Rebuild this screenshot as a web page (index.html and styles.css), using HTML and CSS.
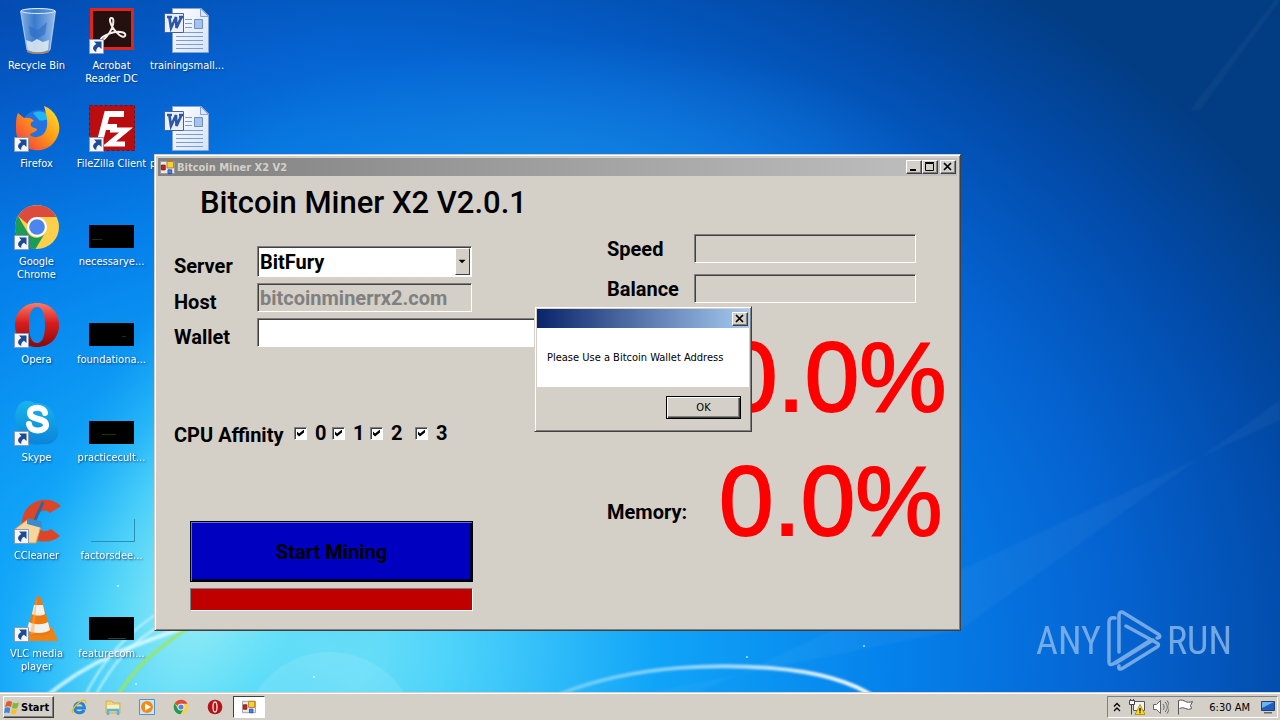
FILE: index.html
```html
<!DOCTYPE html>
<html lang="en">
<head>
<meta charset="utf-8">
<title>Desktop</title>
<link rel="stylesheet" href="styles.css">
</head>
<body>
<svg class="defs" width="0" height="0" aria-hidden="true">
  <defs>
    <linearGradient id="opera" x1="0" y1="0" x2="0" y2="1"><stop offset="0" stop-color="#ff7a66"/><stop offset=".45" stop-color="#d81e1e"/><stop offset="1" stop-color="#8c0808"/></linearGradient>
    <linearGradient id="fox" x1="1" y1="0" x2="0" y2="1"><stop offset="0" stop-color="#ffe930"/><stop offset=".45" stop-color="#ff9a16"/><stop offset="1" stop-color="#f02a48"/></linearGradient>
    <linearGradient id="page" x1="0" y1="0" x2="1" y2="1"><stop offset="0" stop-color="#fff"/><stop offset="1" stop-color="#d5e2f7"/></linearGradient>
    <linearGradient id="sky" x1="0" y1="0" x2="0" y2="1"><stop offset="0" stop-color="#18b4ee"/><stop offset="1" stop-color="#0a84d8"/></linearGradient>
    <linearGradient id="glass" x1="0" y1="0" x2="1" y2="0"><stop offset="0" stop-color="#b9d4f2" stop-opacity=".75"/><stop offset=".4" stop-color="#5d97dc" stop-opacity=".6"/><stop offset="1" stop-color="#cfe2f6" stop-opacity=".75"/></linearGradient>
    <symbol id="shortcut" viewBox="0 0 15 15">
      <path fill="#f4f6fa" stroke="#8b9bb4" d="M.5.5h14v14H.5z"/>
      <path fill="#1d4a94" d="M5 2.500h7.500V10L10 7.700C7.500 9 7 11 7.300 13 3 11 3 7.500 7.300 4.900z"/>
    </symbol>
    <symbol id="word" viewBox="0 0 48 48">
      <path fill="url(#page)" stroke="#86a3d6" d="M9.500 2.500h29l7 7v37h-36z"/>
      <path fill="#dbe8fb" stroke="#86a3d6" d="M37.500 2.500v8h8z"/>
      <path stroke="#7c9cd4" d="M13 26.500h27M13 30.500h27M13 34.500h27M13 38.500h27M13 42.500h27M22 13.500h7M22 17.500h7M22 21.500h7"/>
      <path fill="#a9c2ea" stroke="#6c8ecb" d="M31.500 13.500h8v9h-8z"/>
      <path fill="#e9f0fc" stroke="#3d63b0" d="M1.500 7.500h19v19h-19z"/>
      <path fill="none" stroke="#2c56a8" stroke-width="2.600" d="M4 11h5M6.500 12l1.500 10 5-11 .5 11 5-11M16 11h4"/>
    </symbol>
    <symbol id="chrome" viewBox="0 0 48 48">
      <circle cx="24" cy="24" r="22" fill="#fcd04a"/>
      <path fill="#dd4b3e" d="M5 13A22 22 0 0 1 43.500 14H24a10 10 0 0 0-9.500 7z"/>
      <path fill="#1a9c58" d="M5 13a22 22 0 0 0 17.500 33L32 30a10 10 0 0 1-17 0z"/>
      <circle cx="24" cy="24" r="10" fill="#fff"/><circle cx="24" cy="24" r="7.800" fill="#4c85ee"/>
    </symbol>
    <symbol id="opera-o" viewBox="0 0 48 48">
      <path fill="url(#opera)" fill-rule="evenodd" d="M24 2C37 2 46 11 46 24S37 46 24 46 2 37 2 24 11 2 24 2zm0 4c-5.500 0-8 7-8 18s2.500 18 8 18 8-7 8-18S29.500 6 24 6z"/>
    </symbol>
    <symbol id="form" viewBox="0 0 16 16">
      <path fill="#e8e8e8" stroke="#999" d="M.5 1.500h15v13H.5z"/>
      <path fill="#c22626" stroke="#7d1414" d="M1.500 5.500h4v5h-4z"/>
      <path fill="#f8cf3a" stroke="#b07c10" d="M7.500 1.500h7v7h-7z"/>
      <path fill="#4c80e8" stroke="#2450b0" d="M8.500 10.500h4v4h-4z"/>
    </symbol>
  </defs>
</svg>

<main class="desktop">
  <svg class="wallpaper" viewBox="0 0 1280 720" preserveAspectRatio="none" aria-hidden="true">
    <defs>
      <radialGradient id="base" gradientUnits="userSpaceOnUse" cx="0" cy="0" r="1" gradientTransform="translate(320 650) scale(1130 850)">
        <stop offset="0" stop-color="#74e4f8"/><stop offset=".12" stop-color="#4cd2fa"/><stop offset=".3" stop-color="#10a4f8"/><stop offset=".5" stop-color="#0582ec"/><stop offset=".7" stop-color="#0564d2"/><stop offset=".86" stop-color="#024cac"/><stop offset="1" stop-color="#023c82"/>
      </radialGradient>
      <radialGradient id="glow" gradientUnits="userSpaceOnUse" cx="0" cy="0" r="1" gradientTransform="translate(210 570) rotate(-68) scale(400 180)">
        <stop offset="0" stop-color="#b4f6f4" stop-opacity=".85"/><stop offset=".5" stop-color="#62e0f8" stop-opacity=".6"/><stop offset="1" stop-color="#30c0fa" stop-opacity="0"/>
      </radialGradient>
      <radialGradient id="top" gradientUnits="userSpaceOnUse" cx="0" cy="0" r="1" gradientTransform="translate(560 190) scale(380 150)">
        <stop offset="0" stop-color="#1a8ee6" stop-opacity=".7"/><stop offset="1" stop-color="#1a8ee6" stop-opacity="0"/>
      </radialGradient>
      <radialGradient id="corner" gradientUnits="userSpaceOnUse" cx="0" cy="0" r="1" gradientTransform="scale(340 240)"><stop offset="0" stop-color="#0440aa" stop-opacity=".4"/><stop offset="1" stop-color="#0446b0" stop-opacity="0"/></radialGradient>
      <linearGradient id="arc" x1="0" y1="0" x2="1" y2="0"><stop offset="0" stop-color="#fff" stop-opacity=".3"/><stop offset=".5" stop-color="#fff" stop-opacity=".6"/><stop offset="1" stop-color="#fff"/></linearGradient>
      <filter id="soft" x="-20%" y="-20%" width="140%" height="140%"><feGaussianBlur stdDeviation="1"/></filter>
    </defs>
    <path fill="url(#base)" d="M0 0h1280v720H0z"/>
    <path fill="url(#top)" d="M0 0h1280v400H0z"/>
    <path fill="url(#glow)" d="M0 150h600v570H0z"/>
    <path fill="url(#corner)" d="M0 0h340v240H0z"/>
    <circle cx="330" cy="740" r="88" fill="#b8f4fa" opacity=".18"/>
    <g fill="#fff" filter="url(#soft)">
      <path opacity=".04" d="M960 630L1280 400v20L700 692h-50z"/>
      <path opacity=".04" d="M1190 110L1275 0h5L1200 110z"/>
    </g>
    <g fill="none" filter="url(#soft)">
      <path stroke="#e4fcff" stroke-width="4" opacity=".8" d="M44 698C90 660 130 646 200 622"/>
      <path stroke="#e4fcff" stroke-width="2" opacity=".7" d="M84 698C102 660 130 630 160 612M94 698C110 668 130 640 168 622"/>
      <path stroke="#9ce65a" stroke-width="3" d="M117 696C140 660 160 648 190 626"/>
      <path stroke="url(#arc)" stroke-width="4" d="M560 694C640 662 730 665 770 668 810 671 850 680 876 698"/>
    </g>
    <g fill="#fff" opacity=".7"><circle cx="118" cy="586" r="1"/><circle cx="136" cy="684" r="1"/><circle cx="314" cy="677" r="1"/><circle cx="747" cy="657" r="1"/><circle cx="864" cy="646" r="1"/></g>
  </svg>

  <ul class="icons">
    <li><svg viewBox="0 0 48 48"><path fill="url(#glass)" stroke="#d6e6f8" stroke-opacity=".7" d="M7.500 5C18 2 31 2 42.500 5L37 44c-6 3-16 3-23 0z"/><path fill="#e4ebf2" opacity=".85" d="M13 34l6 2 5-3 6 3 6-2-1 11c-6 2-14 2-20 0z"/><path fill="#2d6fc4" opacity=".65" d="M16 20l9 4 9-8-2 12-8 5-7-4z"/><ellipse cx="25" cy="5" rx="17" ry="2.500" fill="#3c7fd0" fill-opacity=".6" stroke="#dcecfb"/><path fill="none" stroke="#998a72" stroke-width="2" d="M14 45c7 3 15 3 22 0"/></svg><span>Recycle Bin</span></li>
    <li><svg viewBox="0 0 48 48"><path fill="#23100f" stroke="#e1251b" stroke-width="3" d="M3.500 3.500h41v39h-41z"/><path fill="none" stroke="#f3eee6" stroke-width="2" d="M23 12c3-1 3 5 1 10S15 36 13 34s8-7 14-8 12 1 10 4-9-3-12-8-4-9-2-10z"/><use href="#shortcut" x="1" y="33" width="15" height="15"/></svg><span>Acrobat Reader DC</span></li>
    <li><svg viewBox="0 0 48 48"><use href="#word"/></svg><span>trainingsmall...</span></li>

    <li><svg viewBox="0 0 48 48"><circle cx="26" cy="24" r="18" fill="#2372e0"/><path fill="#20b7f0" d="M20 9c8-4 17 0 19 8-5-4-8 1-13-1z"/><path fill="url(#fox)" d="M5 9l6 5c4-1 8 0 10 3-4 1-4 4-2 6l5 2c-1 4-6 3-7 6 4 4 12 2 15-3 4-6 2-16-1-26 11 4 17 16 15 26-3 13-14 20-25 18C8 44 2 34 3 23c0-6 0-10 2-14z"/><use href="#shortcut" x="1" y="33" width="15" height="15"/></svg><span>Firefox</span></li>
    <li><svg viewBox="0 0 48 48"><path fill="#b90d10" stroke="#860a0c" stroke-dasharray="3 2" d="M1.500 1.500h45v45h-45z"/><path fill="none" stroke="#fff" stroke-width="6" d="M36 10H19l-7 27M15 23h14"/><path fill="none" stroke="#fff" stroke-width="5" d="M22 26h16L21 40h16"/><use href="#shortcut" x="1" y="33" width="15" height="15"/></svg><span>FileZilla Client</span></li>
    <li class="covered"><svg viewBox="0 0 48 48"><use href="#word"/></svg><span>p</span></li>

    <li><svg viewBox="0 0 48 48"><use href="#chrome" y="1"/><use href="#shortcut" x="1" y="33" width="15" height="15"/></svg><span>Google Chrome</span></li>
    <li><svg viewBox="0 0 48 48"><path d="M1 23h45v23H1z"/><path stroke="#0a3a18" d="M4 37.500h10"/></svg><span>necessarye...</span></li>
    <li class="gap"></li>

    <li><svg viewBox="0 0 48 48"><use href="#opera-o" y="1"/><use href="#shortcut" x="1" y="33" width="15" height="15"/></svg><span>Opera</span></li>
    <li><svg viewBox="0 0 48 48"><path d="M1 23h45v23H1z"/><path stroke="#0a3a18" d="M34 36.500h4"/></svg><span>foundationa...</span></li>
    <li class="gap"></li>

    <li><svg viewBox="0 0 48 48"><path fill="url(#sky)" d="M13 3c5 0 7 1 9 2 12-1 20 8 20 19 8 11 1 24-12 22C18 49 4 42 5 28-1 17 4 4 13 3z"/><path fill="none" stroke="#fff" stroke-width="6" stroke-linecap="round" d="M32 15c-1-7-15-7-15 0 0 8 16 4 16 12 0 7-16 8-17-1"/><use href="#shortcut" x="1" y="33" width="15" height="15"/></svg><span>Skype</span></li>
    <li><svg viewBox="0 0 48 48"><path d="M1 23h45v23H1z"/><path stroke="#0a3a18" d="M14 36.500h14"/></svg><span>practicecult...</span></li>
    <li class="gap"></li>

    <li><svg viewBox="0 0 48 48"><path fill="#dd4526" d="M48 10l-11 7c-5-5-14-2-14 8 0 9 8 13 15 8l9 7C36 50 11 47 9 27 9 7 33-4 48 10z"/><path fill="#f6d69c" stroke="#cf9b58" d="M14 24l14 6-5 17H8L2 33z"/><path fill="#3c8bc8" d="M14 22l14 3 1 7-15-4z"/><path stroke="#2767a8" stroke-width="3" d="M22 24l8-18"/><use href="#shortcut" x="1" y="33" width="15" height="15"/></svg><span>CCleaner</span></li>
    <li><svg viewBox="0 0 48 48"><path fill="none" stroke="#2c8fb0" d="M3 45.500h43.500V23"/></svg><span>factorsdee...</span></li>
    <li class="gap"></li>

    <li><svg viewBox="0 0 48 48"><path fill="#f08213" d="M13 33h26l6 14H12z"/><path fill="#ee7a0e" d="M23 4c1-2 4-2 5 0l10 34c-4 5-20 5-24 0z"/><path fill="#f1f1ee" d="M21 11h9l2 9c-3 2-10 2-13 0zM16 28c5 3 14 3 19 0l2 8c-5 4-18 4-23 0z"/><path fill="#ffa840" opacity=".5" d="M24 5l-3 35h-4l6-34z"/><use href="#shortcut" x="1" y="33" width="15" height="15"/></svg><span>VLC media player</span></li>
    <li><svg viewBox="0 0 48 48"><path d="M1 23h45v23H1z"/><path stroke="#174a4a" d="M20 44.500h18"/></svg><span>featurecom...</span></li>
    <li class="gap"></li>
  </ul>

  <div class="watermark">
    <span>ANY</span>
    <svg viewBox="0 0 56 62" aria-hidden="true"><g fill="none" stroke="currentColor" stroke-width="3.500" stroke-linejoin="round" stroke-linecap="round"><path d="M9 8C5 7 3 9 3 12v40c0 3 2 3 4 2l38-24"/><path d="M13 42V6c0-4 2-5 5-3l34 21c3 2 2 4-1 4"/><path d="M20 16l31 17c2 1 2 3 0 4L17 58c-3 2-5 1-4-2"/><path d="M10 53l37-23"/></g></svg>
    <span>RUN</span>
  </div>

  <section class="window app" aria-label="Bitcoin Miner X2 V2">
    <header class="titlebar inactive">
      <svg class="form-icon" viewBox="0 0 16 16"><use href="#form"/></svg>
      <span class="caption">Bitcoin Miner X2 V2</span>
      <div class="controls">
        <button aria-label="Minimize"><svg viewBox="0 0 12 10"><path stroke="#000" stroke-width="2" d="M2 8h6"/></svg></button>
        <button aria-label="Maximize"><svg viewBox="0 0 12 10"><path fill="none" stroke="#000" d="M1.500 1.500h8v7h-8zM1 .5h9"/></svg></button>
        <button class="close" aria-label="Close"><svg viewBox="0 0 12 10"><path stroke="#000" stroke-width="1.700" d="M2 1l7 7M9 1L2 8"/></svg></button>
      </div>
    </header>
    <div class="client">
      <h1>Bitcoin Miner X2 V2.0.1</h1>
      <form class="settings">
        <div class="field">
          <label for="server">Server</label>
          <div class="combo">
            <select id="server"><option>BitFury</option></select>
            <svg class="drop" viewBox="0 0 15 26" aria-hidden="true"><path d="M3 11h8l-4 4z"/></svg>
          </div>
        </div>
        <div class="field"><label for="host">Host</label><input class="text" id="host" value="bitcoinminerrx2.com" disabled></div>
        <div class="field wallet"><label for="wallet">Wallet</label><input class="text" id="wallet"></div>
        <fieldset class="affinity">
          <legend>CPU Affinity</legend>
          <div class="cores">
            <label><input type="checkbox" checked>0</label>
            <label><input type="checkbox" checked>1</label>
            <label><input type="checkbox" checked>2</label>
            <label><input type="checkbox" checked>3</label>
          </div>
        </fieldset>
        <button type="button" class="mine">Start Mining</button>
        <div class="status"></div>
      </form>
      <div class="stats">
        <div class="field"><label for="speed">Speed</label><input class="text" id="speed" disabled></div>
        <div class="field"><label for="balance">Balance</label><input class="text" id="balance" disabled></div>
        <div class="meter cpu"><output>0.0%</output></div>
        <div class="meter"><span class="meter-name">Memory:</span><output>0.0%</output></div>
      </div>
    </div>
  </section>

  <section class="window dialog" role="dialog" aria-label="Message">
    <header class="titlebar">
      <div class="controls"><button class="close" aria-label="Close"><svg viewBox="0 0 12 10"><path stroke="#000" stroke-width="1.700" d="M2 1l7 7M9 1L2 8"/></svg></button></div>
    </header>
    <p>Please Use a Bitcoin Wallet Address</p>
    <footer><button class="ok">OK</button></footer>
  </section>
</main>

<nav class="taskbar">
  <button class="start"><svg viewBox="0 0 18 16"><path fill="#e9582b" d="M3 2c2-1 4-1 6 0L8 8C6 7 4 7 1 8z"/><path fill="#7fb93c" d="M10 3c2 1 4 1 7 0l-2 6c-2 1-4 1-6 0z"/><path fill="#3f86dd" d="M1 9c2-1 4-1 6 0l-1 6c-2-1-4-1-6 0z"/><path fill="#f6c02c" d="M9 10c2 1 4 1 6 0l-2 6c-2 1-4 0-5-1z"/></svg>Start</button>
  <div class="launch">
    <button aria-label="Internet Explorer"><svg viewBox="0 0 16 16"><path fill="none" stroke="#2384d8" stroke-width="3" d="M3.500 9h10C13 2 4 2 3.500 9c0 6 8 6 9.500 2"/><path fill="none" stroke="#f0bd22" stroke-width="1.500" d="M2 14C-1 11 10 0 14 1.500c1 .5 1 2 0 3"/></svg></button>
    <button aria-label="Explorer"><svg viewBox="0 0 16 16"><path fill="#f3d479" stroke="#c9a23c" stroke-width=".7" d="M1 2h6l1 2h7v10H1z"/><path fill="#fbf2c4" d="M2 6h12v4H2z"/><path fill="none" stroke="#58b3df" stroke-width="2.500" d="M3 16v-5h10v5"/></svg></button>
    <button aria-label="Media Player"><svg viewBox="0 0 16 16"><path fill="#cfe4f7" stroke="#4f93cf" d="M.5.5h15v15H.5z"/><circle cx="8" cy="8" r="6" fill="#f48a16"/><path fill="#fff" d="M6 4.500l6 3.500-6 3.500z"/></svg></button>
    <button aria-label="Chrome"><svg viewBox="0 0 48 48"><use href="#chrome"/></svg></button>
    <button aria-label="Opera"><svg viewBox="0 0 48 48"><circle cx="24" cy="24" r="22" fill="#b51218"/><ellipse cx="24" cy="24" rx="6" ry="15" fill="#b51218" stroke="#f4dcdc" stroke-width="4"/></svg></button>
  </div>
  <button class="task" aria-label="Bitcoin Miner X2 V2"><svg viewBox="0 0 16 16"><use href="#form"/></svg></button>
  <div class="tray">
    <svg class="chevrons" viewBox="0 0 8 10"><path fill="none" stroke="#000" stroke-width="1.300" d="M1 4.500l3-3 3 3M1 9l3-3 3 3"/></svg>
    <svg viewBox="0 0 16 16"><path fill="#f4f4f4" stroke="#555" d="M4.500 2.500h11v9h-11z"/><path fill="#fff" stroke="#444" d="M.5 1.500h5v4h-5zM2.500 6v9.500M1.500 0v2M4.500 0v2"/><path fill="#ffd91c" stroke="#9c7a00" stroke-width=".7" d="M11 5.500l5 10H6z"/><path stroke="#000" stroke-width="1.300" d="M11 9v3.500M11 13.200v1"/></svg>
    <svg viewBox="0 0 16 16"><path fill="#fff" stroke="#666" d="M.5 5.500h3l4-4v13l-4-4h-3z"/><path fill="none" stroke="#666" d="M10 5c1.500 2 1.500 4 0 6M12 3c3 3 3 7 0 10M14 1.500c3 4 3 9 0 13"/></svg>
    <svg viewBox="0 0 16 16"><path fill="#fff" stroke="#555" d="M1.500 15.500v-14c3-1 5 0 7 1 2 1 4 1 7 0l-2 4 1 3c-2 1-4 1-6 0-2-.8-4-1-6 0"/></svg>
    <time>6:30 AM</time>
    <svg viewBox="0 0 16 16"><path fill="#1c5fc0" stroke="#24406e" d="M1.500 2.500h13v9h-13z"/><path fill="#6fb4f2" d="M2 3h12L2 9z"/><path fill="#666" d="M4 13h8v1.500H4z"/></svg>
  </div>
</nav>
</body>
</html>
```
FILE: styles.css
```css
* { box-sizing: border-box; }

:root {
  --face: #d4d0c8;
  --shadow: #808080;
  --dark: #404040;
  --ui: "DejaVu Sans Condensed", "DejaVu Sans", sans-serif;
}

body {
  margin: 0;
  min-height: 100vh;
  display: flex;
  flex-direction: column;
  overflow: hidden;
  font-family: var(--ui);
  font-size: 11px;
  color: #000;
}

button, input, select { margin: 0; padding: 0; font: inherit; color: inherit; border-radius: 0; }
svg { display: block; }
.defs { position: absolute; }

.desktop { position: relative; flex: 1; }
.wallpaper { position: absolute; top: 0; left: 0; width: 100%; height: 100vh; }

.icons {
  position: relative;
  display: grid;
  grid-template-columns: repeat(3, 75px);
  grid-auto-rows: 98px;
  margin: 0;
  padding: 0;
  list-style: none;
  width: max-content;
  height: 0;
}
.icons li {
  display: flex;
  flex-direction: column;
  align-items: center;
  gap: 5px;
  padding: 6px 2px 0 0;
  color: #fff;
  line-height: 13px;
  text-align: center;
  text-shadow: 1px 1px 2px #0a3c78;
}
.icons svg { width: 48px; height: 48px; flex: none; }
.icons span { max-width: 73px; }
.icons .covered span { align-self: flex-start; }

.watermark {
  position: absolute;
  right: 48px;
  bottom: 20px;
  display: flex;
  align-items: center;
  gap: 5px;
  color: #8fbcec;
  opacity: .8;
  font-family: "Roboto Condensed", "Liberation Sans Narrow", Roboto, sans-serif;
  font-size: 38px;
  font-weight: 400;
  line-height: 62px;
}
.watermark svg { width: 56px; height: 62px; }

.window {
  position: absolute;
  background: var(--face);
  border: 1px solid;
  border-color: var(--face) var(--dark) var(--dark) var(--face);
  box-shadow: inset 1px 1px #fff, inset -1px -1px var(--shadow);
  padding: 3px;
}
.app { left: 154px; top: 154px; width: 807px; }
.dialog { left: 534px; top: 306px; width: 218px; padding-top: 2px; }

.titlebar {
  display: flex;
  align-items: center;
  gap: 2px;
  height: 18px;
  padding: 0 1px 0 2px;
  background: linear-gradient(90deg, #0a246a, #a6caf0);
}
.inactive { background: linear-gradient(90deg, #808080, #c0c0c0); color: var(--face); }
.form-icon { width: 15px; height: 15px; }
.caption { font-weight: bold; }
.controls { display: flex; margin-left: auto; }
.controls button {
  width: 16px;
  height: 14px;
  display: grid;
  place-items: center;
  background: var(--face);
  border: 1px solid;
  border-color: #fff var(--dark) var(--dark) #fff;
  box-shadow: inset -1px -1px var(--shadow);
}
.controls svg { width: 12px; height: 10px; }
.controls .close { margin-left: 2px; }

.client {
  display: grid;
  grid-template-columns: 433px 1fr;
  padding: 9px 16px 16px;
  font-family: Roboto, "Liberation Sans", sans-serif;
  font-size: 20px;
  font-weight: bold;
  line-height: 24px;
}
h1 {
  grid-column: 1 / -1;
  margin: 0 0 13px;
  padding-left: 26px;
  font-size: 31px;
  font-weight: 500;
  line-height: 36px;
}
.settings { display: flex; flex-direction: column; gap: 6px; padding-top: 12px; }
.field { display: grid; grid-template-columns: 83px 215px; align-items: center; }
.settings .field label { padding-top: 8px; line-height: 20px; }
.settings .wallet { grid-template-columns: 83px 336px; }

.text, .combo {
  width: 100%;
  height: 29px;
  border: 1px solid;
  border-color: var(--shadow) #fff #fff var(--shadow);
  box-shadow: inset 1px 1px var(--dark);
  background: #fff;
}
.text { padding: 0 2px; }
.text:disabled { background: var(--face); color: var(--shadow); }
.combo { display: grid; grid-template-columns: 1fr 15px; height: 31px; padding: 1px; }
.combo select {
  grid-area: 1 / 1 / 2 / 3;
  appearance: none;
  border: 0;
  padding-left: 1px;
  background: none;
}
.drop {
  grid-area: 1 / 2;
  width: 15px;
  height: 100%;
  background: var(--face);
  border: 1px solid;
  border-color: #fff var(--dark) var(--dark) #fff;
  pointer-events: none;
}

.affinity { display: grid; grid-template-columns: 120px 1fr; margin: 70px 0 0; padding: 0; border: 0; height: 24px; }
.affinity legend { float: left; padding: 0; }
.cores { display: grid; grid-template-columns: 38px 38px 45px auto; justify-content: start; height: 20px; line-height: 20px; }
.cores label { display: flex; align-items: center; gap: 8px; }
.cores input {
  appearance: none;
  width: 13px;
  height: 13px;
  flex: none;
  display: grid;
  place-items: center;
  background: #fff;
  border: 1px solid;
  border-color: var(--shadow) #fff #fff var(--shadow);
  box-shadow: inset 1px 1px var(--dark);
}
.cores input:checked::before {
  content: "";
  width: 7px;
  height: 7px;
  background: #000;
  clip-path: polygon(0 29%, 29% 57%, 100% 0, 100% 42%, 29% 100%, 0 71%);
}

.mine {
  width: 283px;
  height: 61px;
  margin: 68px 0 0 16px;
  background: #0000c0;
  border: 1px solid #000;
  box-shadow: inset 1px 1px #6a6ad8, inset -1px -1px #000, inset -2px -2px #000040;
}
.status {
  width: 283px;
  height: 23px;
  margin-left: 16px;
  background: #c00000;
  border: 1px solid;
  border-color: var(--shadow) #fff #fff var(--shadow);
}

.stats { display: flex; flex-direction: column; gap: 11px; }
.stats .field { grid-template-columns: 87px 222px; }
.meter { display: grid; grid-template-columns: 112px auto; justify-content: start; align-items: center; margin-top: 13px; }
.meter output {
  grid-column: 2;
  color: #f00;
  font-family: "Liberation Sans", Arial, sans-serif;
  font-size: 98px;
  font-weight: normal;
  line-height: 100px;
  -webkit-text-stroke: 2px #f00;
}
.meter-name { padding-top: 22px; }
.cpu { grid-template-columns: 116px auto; }

.dialog .titlebar { height: 19px; margin: 0 -1px; }
.dialog p {
  margin: 0 -1px;
  padding: 23px 10px;
  background: #fff;
  line-height: 13px;
}
.dialog footer { display: flex; justify-content: flex-end; padding: 9px 7px; }
.ok {
  width: 75px;
  height: 23px;
  background: var(--face);
  border: 1px solid #000;
  box-shadow: inset 1px 1px #fff, inset -1px -1px var(--dark), inset -2px -2px var(--shadow);
}

.taskbar {
  position: relative;
  display: flex;
  align-items: center;
  height: 28px;
  padding: 1px 2px 0 3px;
  background: var(--face);
  border-top: 1px solid var(--face);
  box-shadow: inset 0 1px #fff;
}
.start {
  display: flex;
  align-items: center;
  gap: 1px;
  width: 51px;
  height: 22px;
  font-weight: bold;
  background: var(--face);
  border: 1px solid;
  border-color: #fff var(--dark) var(--dark) #fff;
  box-shadow: inset -1px -1px var(--shadow);
}
.start svg { width: 16px; height: 16px; flex: none; }
.launch { display: flex; gap: 18px; padding: 0 10px 0 17px; }
.launch button { border: 0; background: none; }
.launch svg, .tray svg, .task svg { width: 16px; height: 16px; }
.task {
  display: grid;
  place-items: center;
  width: 32px;
  height: 22px;
  background: #fff;
  border: 1px solid;
  border-color: var(--dark) #fff #fff var(--dark);
}
.task svg { width: 14px; height: 14px; }
.tray {
  display: flex;
  align-items: center;
  gap: 8px;
  height: 22px;
  margin-left: auto;
  padding: 0 1px 0 5px;
  border: 1px solid;
  border-color: var(--shadow) #fff #fff var(--shadow);
}
.tray .chevrons { width: 8px; height: 10px; }
.tray time { padding: 0 2px 0 8px; }
```
